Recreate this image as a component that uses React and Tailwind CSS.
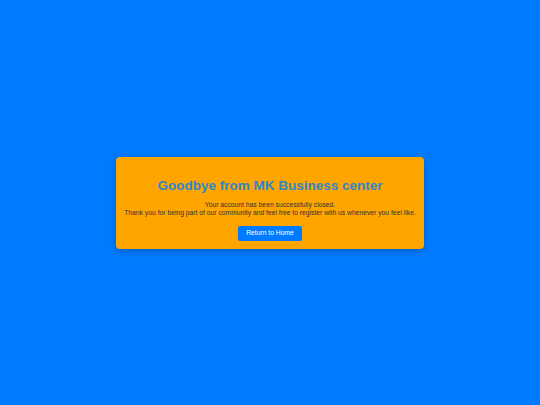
export default function App() {
  return (
    <div
      className="w-full h-[405px] bg-[#007bff] flex items-center justify-center"
      style={{ fontFamily: '"Liberation Sans", Arial, sans-serif' }}
    >
      <div className="w-[308px] h-[92px] bg-[#ffa500] rounded-[4px] shadow-[0_2px_6px_rgba(0,0,0,0.25)] flex flex-col items-center pt-[21px]">
        <h1 className="text-[13.5px] leading-[16px] font-bold text-[#2f86c8]">
          Goodbye from MK Business center
        </h1>
        <p className="text-[6.75px] leading-[8px] text-[#333333] text-center mt-[7px]">
          Your account has been successfully closed.
          <br />
          Thank you for being part of our community and feel free to register with us whenever you feel like.
        </p>
        <button className="mt-[9px] w-[64px] h-[15px] bg-[#007bff] text-white text-[6.75px] rounded-[2px] flex items-center justify-center">
          Return to Home
        </button>
      </div>
    </div>
  );
}
